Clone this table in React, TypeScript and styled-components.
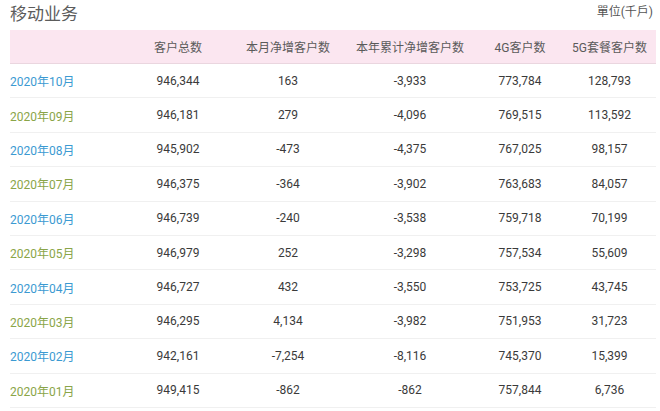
import React from "react";
import styled, { createGlobalStyle } from "styled-components";

const Global = createGlobalStyle`
  html, body { margin: 0; padding: 0; background: #fff; }
  body { font-family: Roboto, "Noto Sans CJK SC", sans-serif; }
`;

const Page = styled.div`
  width: 660px;
  height: 411px;
  overflow: hidden;
  padding: 0 4px 0 10px;
  box-sizing: border-box;
`;

const TopBar = styled.div`
  display: flex;
  justify-content: space-between;
  align-items: flex-start;
  height: 30px;
`;

const Title = styled.div`
  font-family: "Noto Sans CJK SC", sans-serif;
  font-size: 17px;
  line-height: 25px;
  margin-top: -1px;
  padding-top: 1px;
  color: #5c5c5c;
`;

const Unit = styled.div`
  font-family: Roboto, "Noto Sans CJK TC", sans-serif;
  font-size: 12px;
  line-height: 16px;
  margin-top: 4px;
  margin-right: 3px;
  color: #555;
`;

const cols = "113px 110px 110px 134px 86px 93px";

const HeaderRow = styled.div`
  display: grid;
  grid-template-columns: ${cols};
  height: 34px;
  background: #fbe6f0;
  border-bottom: 1px solid #ead6df;
  box-sizing: border-box;
  align-items: center;
`;

const HeadCell = styled.div`
  text-align: center;
  font-size: 12px;
  color: #5a5a5a;
  font-family: Roboto, "Noto Sans CJK SC", sans-serif;
`;

const Row = styled.div`
  display: grid;
  grid-template-columns: ${cols};
  height: 34.4px;
  border-bottom: 1px solid #f0f0f0;
  box-sizing: border-box;
  align-items: center;
`;

const MonthCell = styled.div<{ $alt: boolean }>`
  font-size: 12px;
  color: ${(p) => (p.$alt ? "#8aa548" : "#3b9ad2")};
  font-family: Roboto, "Noto Sans CJK SC", sans-serif;
`;

const Cell = styled.div`
  text-align: center;
  font-size: 12px;
  color: #3a3a3a;
  font-family: Roboto, sans-serif;
`;

const headers = ["", "客户总数", "本月净增客户数", "本年累计净增客户数", "4G客户数", "5G套餐客户数"];

const rows: [string, string, string, string, string, string][] = [
  ["2020年10月", "946,344", "163", "-3,933", "773,784", "128,793"],
  ["2020年09月", "946,181", "279", "-4,096", "769,515", "113,592"],
  ["2020年08月", "945,902", "-473", "-4,375", "767,025", "98,157"],
  ["2020年07月", "946,375", "-364", "-3,902", "763,683", "84,057"],
  ["2020年06月", "946,739", "-240", "-3,538", "759,718", "70,199"],
  ["2020年05月", "946,979", "252", "-3,298", "757,534", "55,609"],
  ["2020年04月", "946,727", "432", "-3,550", "753,725", "43,745"],
  ["2020年03月", "946,295", "4,134", "-3,982", "751,953", "31,723"],
  ["2020年02月", "942,161", "-7,254", "-8,116", "745,370", "15,399"],
  ["2020年01月", "949,415", "-862", "-862", "757,844", "6,736"],
];

export default function App() {
  return (
    <Page>
      <Global />
      <TopBar>
        <Title>移动业务</Title>
        <Unit>單位(千戶)</Unit>
      </TopBar>
      <HeaderRow>
        {headers.map((h, i) => (
          <HeadCell key={i}>{h}</HeadCell>
        ))}
      </HeaderRow>
      {rows.map((r, i) => (
        <Row key={r[0]}>
          <MonthCell $alt={i % 2 === 1}>{r[0]}</MonthCell>
          {r.slice(1).map((v, j) => (
            <Cell key={j}>{v}</Cell>
          ))}
        </Row>
      ))}
    </Page>
  );
}
